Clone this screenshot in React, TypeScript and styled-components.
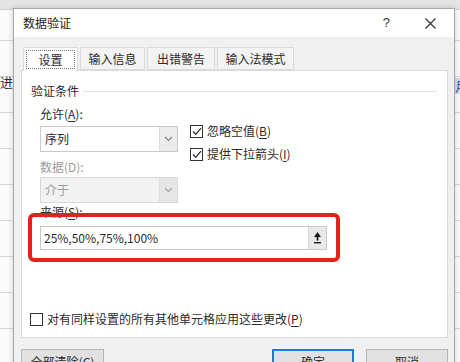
import styled, { createGlobalStyle } from "styled-components";

// ---------- global page styles ----------
const GlobalStyle = createGlobalStyle`
  html, body {
    margin: 0;
    padding: 0;
    background: #ffffff;
  }
  body {
    font-family: "Noto Sans CJK SC", "Noto Sans", "Liberation Sans", sans-serif;
    font-size: 12px;
    line-height: 16px;
    color: #2b2b2b;
  }
`;

// ---------- small pieces ----------
function Chevron({ muted }: { muted?: boolean }) {
  return (
    <svg width="9" height="6" viewBox="0 0 9 6">
      <path
        d="M1 1 L4.5 4.5 L8 1"
        fill="none"
        stroke={muted ? "#a0a0a0" : "#808080"}
        strokeWidth="1.1"
      />
    </svg>
  );
}

function CheckMark() {
  return (
    <svg width="10" height="9" viewBox="0 0 10 9">
      <path d="M1 4.5 L3.8 7.3 L9 1.2" fill="none" stroke="#303030" strokeWidth="1.3" />
    </svg>
  );
}

function RefIcon() {
  return (
    <svg width="9" height="14" viewBox="0 0 9 14">
      <path d="M4.5 1 L8 6 L1 6 Z" fill="#1a1a1a" />
      <rect x="3.6" y="5.5" width="1.8" height="4" fill="#1a1a1a" />
      <rect x="1" y="11" width="7" height="1.4" fill="#1a1a1a" />
    </svg>
  );
}

type SelectProps = { value: string; disabled?: boolean };

function Select({ value, disabled }: SelectProps) {
  return (
    <SelectBox $disabled={disabled}>
      <SelectValue $disabled={disabled}>{value}</SelectValue>
      <SelectArrow $disabled={disabled}>
        <Chevron muted={disabled} />
      </SelectArrow>
    </SelectBox>
  );
}

function Check({ label, checked }: { label: React.ReactNode; checked?: boolean }) {
  return (
    <CheckRow>
      <CheckBox>{checked ? <CheckMark /> : null}</CheckBox>
      <span>{label}</span>
    </CheckRow>
  );
}

const tabs = [
  { label: "设置", width: 55 },
  { label: "输入信息", width: 65 },
  { label: "出错警告", width: 68 },
  { label: "输入法模式", width: 77 },
];

export default function App() {
  return (
    <>
      <GlobalStyle />
      <Page>
        {/* ------ spreadsheet behind the dialog ------ */}
        <Sheet>
          <TopStrip />
          <CellText style={{ top: 74 }}>进</CellText>
          <SelectedCell>月</SelectedCell>
        </Sheet>

        {/* ------ data validation dialog ------ */}
        <Dialog>
          <TitleBar>
            <Title>数据验证</Title>
            <TitleButtons>
              <HelpMark>?</HelpMark>
              <svg width="13" height="13" viewBox="0 0 13 13">
                <path d="M1.5 1.5 L11.5 11.5 M11.5 1.5 L1.5 11.5" stroke="#333" strokeWidth="1.2" />
              </svg>
            </TitleButtons>
          </TitleBar>

          <Body>
            <TabStrip>
              {tabs.map((t, i) => (
                <Tab key={t.label} $active={i === 0} $w={t.width}>
                  {i === 0 ? <FocusRing>{t.label}</FocusRing> : t.label}
                </Tab>
              ))}
            </TabStrip>

            <Panel>
              <GroupHeader>
                <span>验证条件</span>
                <GroupLine />
              </GroupHeader>

              <FormRow>
                <FieldColumn>
                  <FieldLabel $top={7} $bottom={4}>
                    允许(<u>A</u>):
                  </FieldLabel>
                  <Select value="序列" />
                  <FieldLabel $muted $top={7} $bottom={2}>
                    数据(D):
                  </FieldLabel>
                  <Select value="介于" disabled />
                </FieldColumn>
                <Checks>
                  <Check label={<>忽略空值(<u>B</u>)</>} checked />
                  <Check label={<>提供下拉箭头(<u>I</u>)</>} checked />
                </Checks>
              </FormRow>

              <FieldLabel $top={1} $bottom={6}>
                来源(<u>S</u>):
              </FieldLabel>
              <SourceInput>
                <SourceText>25%,50%,75%,100%</SourceText>
                <RefButton>
                  <RefIcon />
                </RefButton>
              </SourceInput>

              <Spacer />
              <BottomCheck>
                <CheckBox />
                <span>
                  对有同样设置的所有其他单元格应用这些更改(<u>P</u>)
                </span>
              </BottomCheck>

              <Highlight />
            </Panel>

            <ButtonRow>
              <Button $w={83}>全部清除(C)</Button>
              <RightButtons>
                <Button $w={82} $primary>
                  确定
                </Button>
                <Button $w={82}>取消</Button>
              </RightButtons>
            </ButtonRow>
          </Body>
        </Dialog>
      </Page>
    </>
  );
}

// ------ component styles -------
const Page = styled.div`
  position: relative;
  width: 460px;
  height: 362px;
  overflow: hidden;
`;

const Sheet = styled.div`
  position: absolute;
  inset: 0;
  background-color: #fbfbfb;
  background-image: repeating-linear-gradient(
    to bottom,
    transparent 0,
    transparent 35px,
    #d6d6d6 35px,
    #d6d6d6 36px
  );
  background-position: 0 5px;
`;

const TopStrip = styled.div`
  height: 9px;
  background: #e4e4e4;
  border-bottom: 1px solid #d0d0d0;
`;

const CellText = styled.div`
  position: absolute;
  left: 0;
  font-size: 13px;
  color: #333;
`;

const SelectedCell = styled.div`
  position: absolute;
  left: 454px;
  top: 78px;
  width: 10px;
  height: 16px;
  background: #cfe0f3;
  color: #2b5797;
  font-size: 13px;
  line-height: 16px;
  padding-left: 1px;
`;

const Dialog = styled.div`
  position: absolute;
  left: 13px;
  top: 8px;
  width: 440px;
  height: 380px;
  background: #f0f0f0;
  border: 1px solid #a8a8a8;
  box-shadow: 0 0 6px rgba(0, 0, 0, 0.18);
  display: flex;
  flex-direction: column;
`;

const TitleBar = styled.div`
  height: 28px;
  background: #ffffff;
  display: flex;
  align-items: center;
  justify-content: space-between;
  padding: 0 17px 0 9px;
`;

const Title = styled.span`
  font-size: 12px;
  color: #222;
`;

const TitleButtons = styled.div`
  display: flex;
  align-items: center;
  gap: 34px;
`;

const HelpMark = styled.span`
  font-family: "Liberation Sans", sans-serif;
  font-size: 13px;
  color: #333;
`;

const Body = styled.div`
  flex: 1;
  display: flex;
  flex-direction: column;
  padding: 9px 5px 0 7px;
`;

const TabStrip = styled.div`
  display: flex;
  align-items: flex-end;
  height: 24px;
  gap: 2px;
  padding-left: 2px;
`;

const Tab = styled.div<{ $active?: boolean; $w: number }>`
  width: ${(p) => p.$w}px;
  height: ${(p) => (p.$active ? 24 : 23)}px;
  box-sizing: border-box;
  display: flex;
  align-items: center;
  justify-content: center;
  background: ${(p) => (p.$active ? "#ffffff" : "#f3f3f3")};
  border: 1px solid #dadada;
  border-bottom: ${(p) => (p.$active ? "none" : "1px solid #dadada")};
  color: #2b2b2b;
  position: relative;
  z-index: ${(p) => (p.$active ? 1 : 0)};
  margin-bottom: ${(p) => (p.$active ? -1 : 0)}px;
`;

const FocusRing = styled.span`
  box-sizing: border-box;
  display: flex;
  align-items: center;
  justify-content: center;
  width: calc(100% - 4px);
  height: calc(100% - 4px);
  border: 1px dotted #777;
`;

const Panel = styled.div`
  position: relative;
  width: 427px;
  height: 268px;
  box-sizing: border-box;
  background: #ffffff;
  border: 1px solid #dadada;
  display: flex;
  flex-direction: column;
  padding: 12px 10px 11px 18px;
`;

const GroupHeader = styled.div`
  display: flex;
  align-items: center;
  gap: 4px;
  margin-left: -9px;
  height: 16px;
  color: #2b2b2b;
`;

const GroupLine = styled.div`
  flex: 1;
  height: 1px;
  background: #e3e3e3;
`;

const FormRow = styled.div`
  display: flex;
  align-items: flex-start;
  gap: 12px;
`;

const FieldColumn = styled.div`
  display: flex;
  flex-direction: column;
`;

const FieldLabel = styled.div<{ $muted?: boolean; $top: number; $bottom: number }>`
  height: 16px;
  margin-top: ${(p) => p.$top}px;
  margin-bottom: ${(p) => p.$bottom}px;
  color: ${(p) => (p.$muted ? "#9a9a9a" : "#2b2b2b")};
  u {
    text-underline-offset: 2px;
  }
`;

const SelectBox = styled.div<{ $disabled?: boolean }>`
  width: 138px;
  height: 26px;
  box-sizing: border-box;
  display: flex;
  border: 1px solid ${(p) => (p.$disabled ? "#d8d8d8" : "#c9c9c9")};
  background: ${(p) => (p.$disabled ? "#f2f2f2" : "#ffffff")};
`;

const SelectValue = styled.div<{ $disabled?: boolean }>`
  flex: 1;
  display: flex;
  align-items: center;
  padding-left: 4px;
  color: ${(p) => (p.$disabled ? "#9a9a9a" : "#2b2b2b")};
`;

const SelectArrow = styled.div<{ $disabled?: boolean }>`
  width: 17px;
  display: flex;
  align-items: center;
  justify-content: center;
  background: ${(p) => (p.$disabled ? "#e6e6e6" : "#ececec")};
  border-left: 1px solid #dedede;
`;

const Checks = styled.div`
  display: flex;
  flex-direction: column;
  gap: 9px;
  padding-top: 25px;
`;

const CheckRow = styled.div`
  display: flex;
  align-items: center;
  gap: 4px;
  height: 14px;
  u {
    text-underline-offset: 2px;
  }
`;

const CheckBox = styled.div`
  width: 13px;
  height: 13px;
  box-sizing: border-box;
  border: 1px solid #333;
  background: #fff;
  display: flex;
  align-items: center;
  justify-content: center;
  flex: none;
`;

const SourceInput = styled.div`
  width: 287px;
  height: 24px;
  box-sizing: border-box;
  display: flex;
  border: 1px solid #c9c9c9;
  background: #fff;
`;

const SourceText = styled.div`
  flex: 1;
  display: flex;
  align-items: center;
  padding-left: 3px;
  color: #2b2b2b;
`;

const RefButton = styled.div`
  width: 17px;
  display: flex;
  align-items: center;
  justify-content: center;
  background: #e9e9e9;
  border-left: 1px solid #d4d4d4;
`;

const Spacer = styled.div`
  flex: 1;
`;

const BottomCheck = styled.div`
  display: flex;
  align-items: center;
  gap: 4px;
  height: 14px;
  margin-left: -10px;
  color: #2b2b2b;
  u {
    text-underline-offset: 2px;
  }
`;

const Highlight = styled.div`
  position: absolute;
  left: 6px;
  top: 142px;
  width: 312px;
  height: 49px;
  box-sizing: border-box;
  border: 4px solid #e3241b;
  border-radius: 6px;
  pointer-events: none;
`;

const ButtonRow = styled.div`
  display: flex;
  justify-content: space-between;
  margin-top: 11px;
  width: 427px;
`;

const RightButtons = styled.div`
  display: flex;
  gap: 12px;
`;

const Button = styled.div<{ $w: number; $primary?: boolean }>`
  width: ${(p) => p.$w}px;
  height: 26px;
  box-sizing: border-box;
  display: flex;
  align-items: center;
  justify-content: center;
  background: #e1e1e1;
  border: ${(p) => (p.$primary ? "2px solid #1f7ad1" : "1px solid #b5b5b5")};
  color: #2b2b2b;
`;
